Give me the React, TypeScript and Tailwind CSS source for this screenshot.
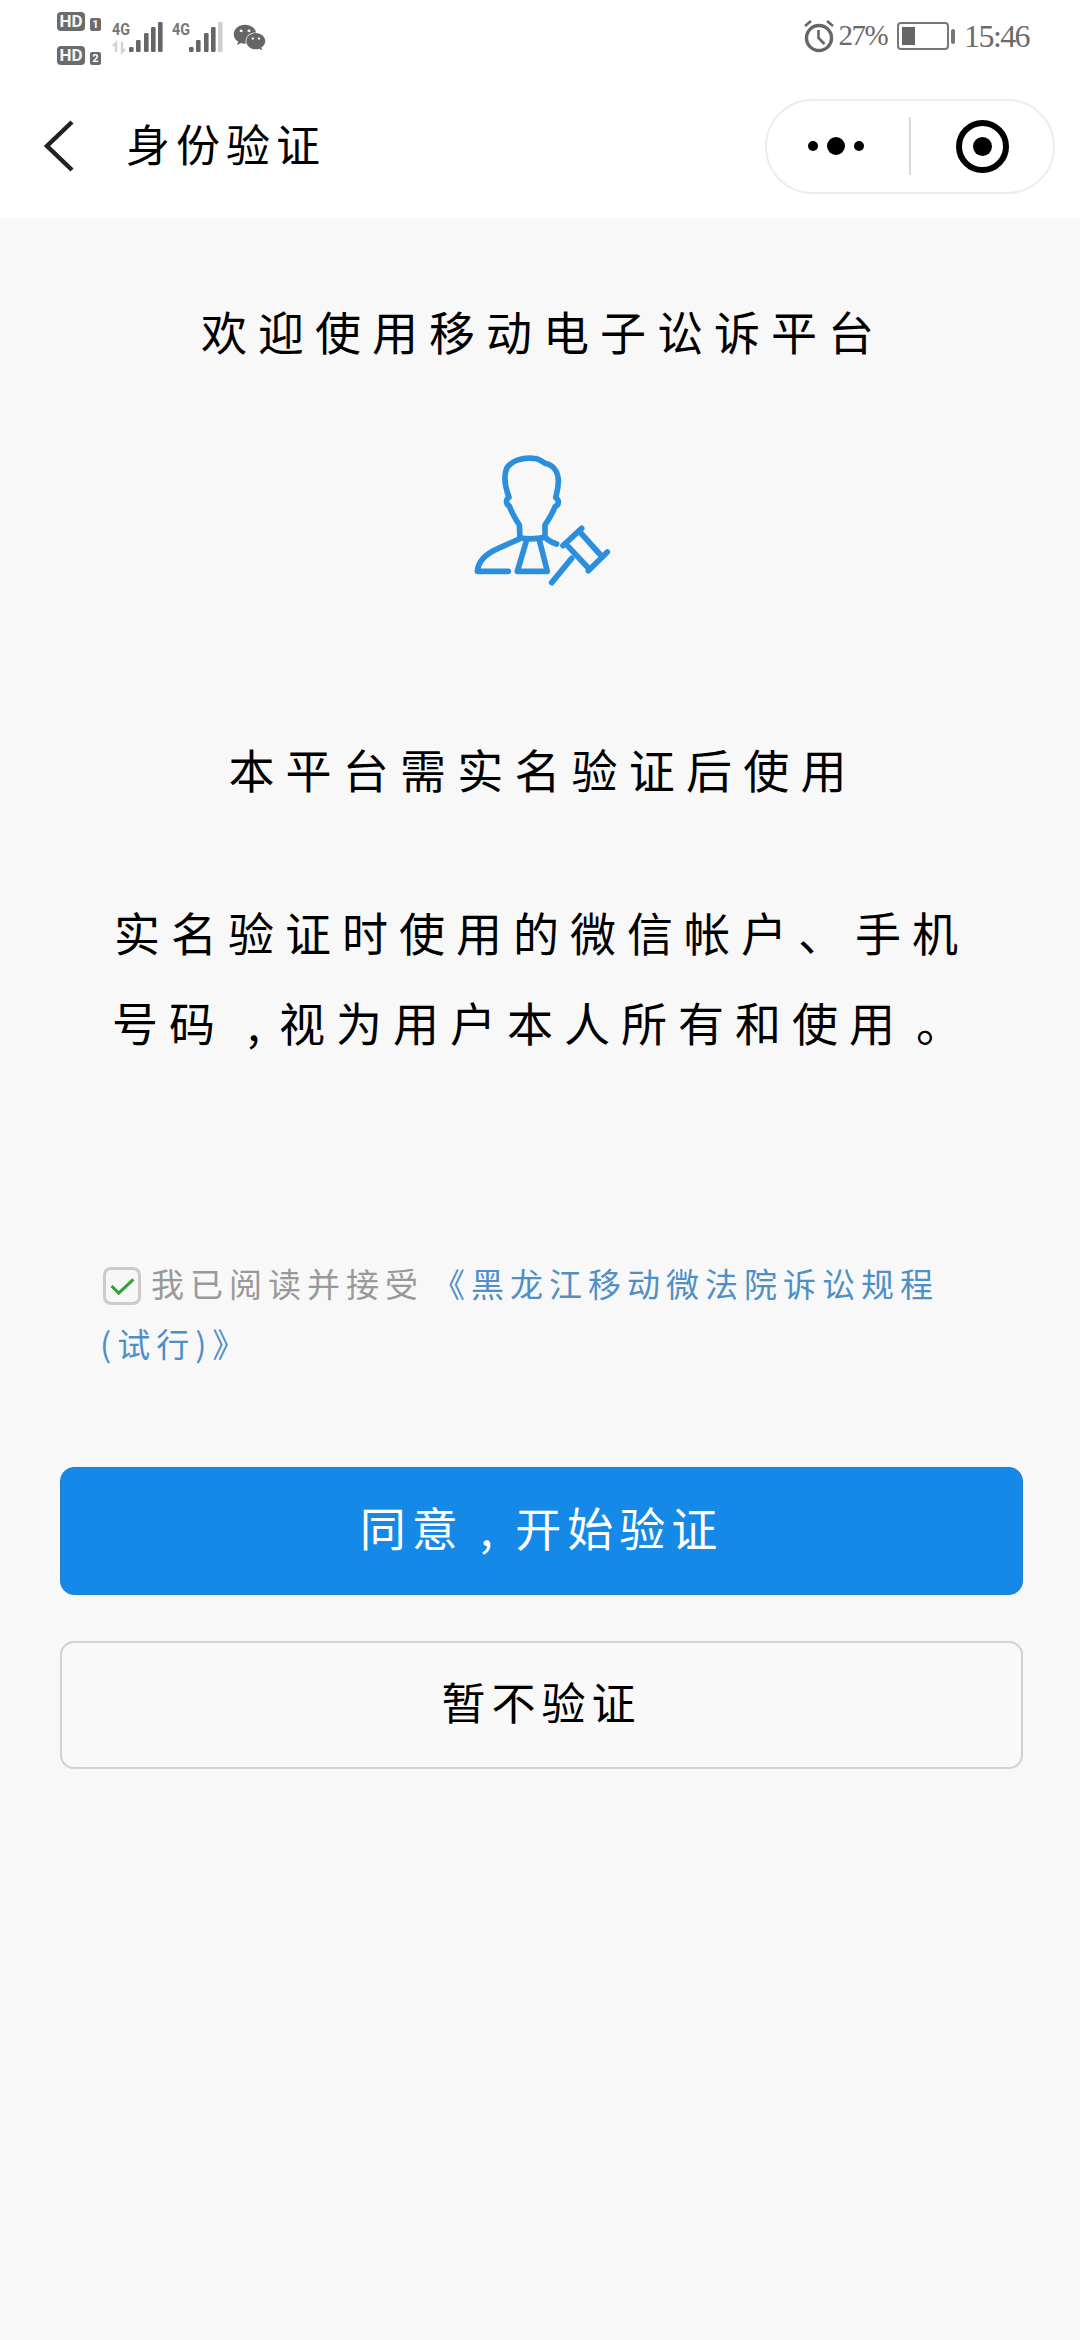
import { FaWeixin } from "react-icons/fa";

const cjk = { fontFamily: '"Noto Sans CJK SC", sans-serif' };

function Signal({ arrows, lastDim }: { arrows?: boolean; lastDim?: boolean }) {
  const bars = [
    [18, 44],
    [25, 37],
    [33, 30],
    [40, 24],
    [47, 19],
  ];
  return (
    <svg width="56" height="56" viewBox="0 0 56 56">
      <text x="1" y="32" fontSize="17" fontWeight="700" fill="#777" fontFamily="Roboto, sans-serif" textLength="18" lengthAdjust="spacingAndGlyphs">
        4G
      </text>
      {arrows && <path d="M5 49V40l-3 3M11 39v10l3-3" stroke="#d2d2d2" strokeWidth="2.4" fill="none" />}
      {bars.map(([x, y], i) => (
        <rect
          key={i}
          x={x}
          y={y}
          width={4.6}
          height={49 - y}
          rx="1.2"
          fill={lastDim && i === 4 ? "#cfcfcf" : "#666"}
        />
      ))}
    </svg>
  );
}

function HdRow({ n }: { n: string }) {
  return (
    <div className="flex items-center gap-[5px] h-[20px]">
      <span className="w-[28px] h-[19px] rounded-[4px] bg-[#6b6b6b] text-[#f4f4f4] text-[17px] leading-[19px] font-bold text-center font-['Roboto']">
        HD
      </span>
      <span className="w-[11px] h-[13px] mt-[6px] rounded-[2px] bg-[#6b6b6b] text-white text-[11px] leading-[13px] font-bold text-center font-['Roboto']">
        {n}
      </span>
    </div>
  );
}

function PersonIcon() {
  return (
    <svg width="200" height="170" viewBox="0 0 600 510" fill="none" stroke="#2b8fdd" strokeWidth="17" strokeLinejoin="round" strokeLinecap="round">
      <path d="M240 322 L238 285 C225 265 214 245 208 228 C197 222 197 208 207 202 C195 170 190 140 200 115 C215 90 250 82 280 85 C295 85 305 92 315 100 C340 105 355 125 355 155 C355 175 350 190 347 203 C358 210 358 225 345 230 C338 250 325 270 315 285 L315 322" />
      <path d="M240 324 Q278 330 315 322 Q330 336 350 342" />
      <path d="M240 326 L175 355 C140 370 115 390 112 424 L205 424" />
      <path d="M260 330 L232 424 L322 424 L298 330" />
      <path d="M369 347 L425 295" />
      <path d="M445 422 L502 366" />
      <path d="M417 303 L487 381 M385 350 L442 411" />
      <path d="M395 385 L335 458" />
    </svg>
  );
}

export default function App() {
  return (
    <div className="w-[1080px] h-[2340px] bg-[#f8f8f8] overflow-hidden" style={cjk}>
      <header className="bg-white h-[218px]">
        <div className="h-[74px] flex items-start justify-between pl-[57px] pr-[51px]">
          <div className="flex items-start">
            <div className="flex flex-col gap-[14px] pt-[11px]">
              <HdRow n="1" />
              <HdRow n="2" />
            </div>
            <div className="flex ml-[10px] mt-[3px] gap-[4px]">
              <Signal arrows />
              <Signal lastDim />
            </div>
            <FaWeixin className="ml-[6px] mt-[21px] text-[#666]" size={33} />
          </div>
          <div className="flex items-center h-[72px] text-[#6a6a6a] font-['Liberation_Serif'] text-[32px]">
            <svg width="32" height="34" viewBox="0 0 32 34" fill="none" stroke="#666" strokeWidth="3.4">
              <circle cx="16" cy="19" r="12.5" />
              <path d="M15.5 11v8l6 6" strokeWidth="2.6" />
              <path d="M2 7l6-5M30 7l-6-5" strokeWidth="2.6" />
            </svg>
            <span className="ml-[3px] text-[29px] tracking-[-1.5px]">27%</span>
            <span className="ml-[10px] w-[52px] h-[28px] rounded-[4px] border-2 border-[#777] p-[3px] flex">
              <span className="w-[13px] bg-[#666]" />
            </span>
            <span className="ml-[2px] w-[4px] h-[15px] rounded-[2px] bg-[#777]" />
            <span className="ml-[9px] tracking-[-1.6px]">15:46</span>
          </div>
        </div>
        <nav className="h-[144px] flex items-center justify-between pr-[25px]">
          <div className="flex items-center">
            <svg className="ml-[42px]" width="34" height="54" viewBox="0 0 34 54" fill="none" stroke="#222" strokeWidth="4.5">
              <path d="M30 3 L5 27 L30 51" />
            </svg>
            <h1 className="ml-[50px] -mt-[6px] text-[44px] leading-[60px] tracking-[6px] text-black">身份验证</h1>
          </div>
          <div className="w-[290px] h-[95px] rounded-full border-2 border-[#ececec] flex items-center">
            <div className="w-[144px] h-[58px] flex items-center justify-center gap-[9px] border-r-2 border-[#d8d8d8] pr-[4px]">
              <span className="w-[10px] h-[10px] rounded-full bg-black" />
              <span className="w-[18px] h-[18px] rounded-full bg-black" />
              <span className="w-[10px] h-[10px] rounded-full bg-black" />
            </div>
            <div className="flex-1 flex items-center justify-center">
              <span className="w-[53px] h-[53px] rounded-full border-[6px] border-black flex items-center justify-center">
                <span className="w-[19px] h-[19px] rounded-full bg-black" />
              </span>
            </div>
          </div>
        </nav>
      </header>

      <main className="flex flex-col">
        <h2 className="mt-[82px] pl-[6px] text-center text-[46px] leading-[60px] tracking-[11px] text-black">
          欢迎使用移动电子讼诉平台
        </h2>
        <div className="mt-[70px] flex justify-center">
          <PersonIcon />
        </div>
        <h3 className="mt-[138px] pl-[6px] text-center text-[46px] leading-[60px] tracking-[11.2px] text-black">
          本平台需实名验证后使用
        </h3>
        <p className="mt-[88px] pl-[114px] text-[46px] leading-[90px] tracking-[11px] text-black whitespace-nowrap">
          <span className="block">实名验证时使用的微信帐户、手机</span>
          <span className="block -ml-[2px]">
            号码 ,<span className="ml-[8px]">视为用户本人所有和使用</span>
            <span className="ml-[10px]">。</span>
          </span>
        </p>
        <div className="mt-[187px] ml-[100px] w-[860px] text-[33px] leading-[60px] tracking-[6px] text-[#999999]">
          <span className="inline-flex align-middle ml-[3px] mr-[10px] -mt-[4px] w-[38px] h-[38px] rounded-[8px] border-[3px] border-[#cbcbcb] bg-[#f7f7f7] items-center justify-center">
            <svg width="25" height="19" viewBox="0 0 26 20" fill="none" stroke="#2fa52f" strokeWidth="3.2">
              <path d="M1.5 9.5 L9 17 L24.5 2.5" />
            </svg>
          </span>
          我已阅读并接受<span className="ml-[8px] text-[#4f8fc7]">《黑龙江移动微法院诉讼规程</span>
          <span className="text-[#4f8fc7]">(试行)》</span>
        </div>
        <button className="mt-[94px] ml-[60px] mr-[57px] h-[128px] pb-[10px] rounded-[14px] bg-[#1589e8] border border-[#1f7fc9] text-white text-[46px] leading-[60px] tracking-[6px]">
          同意 , 开始验证
        </button>
        <button className="mt-[46px] ml-[60px] mr-[57px] h-[128px] pb-[8px] rounded-[14px] bg-[#f9f9f9] border-2 border-[#d2d2d2] text-black text-[44px] leading-[60px] tracking-[6px]">
          暂不验证
        </button>
      </main>
    </div>
  );
}
